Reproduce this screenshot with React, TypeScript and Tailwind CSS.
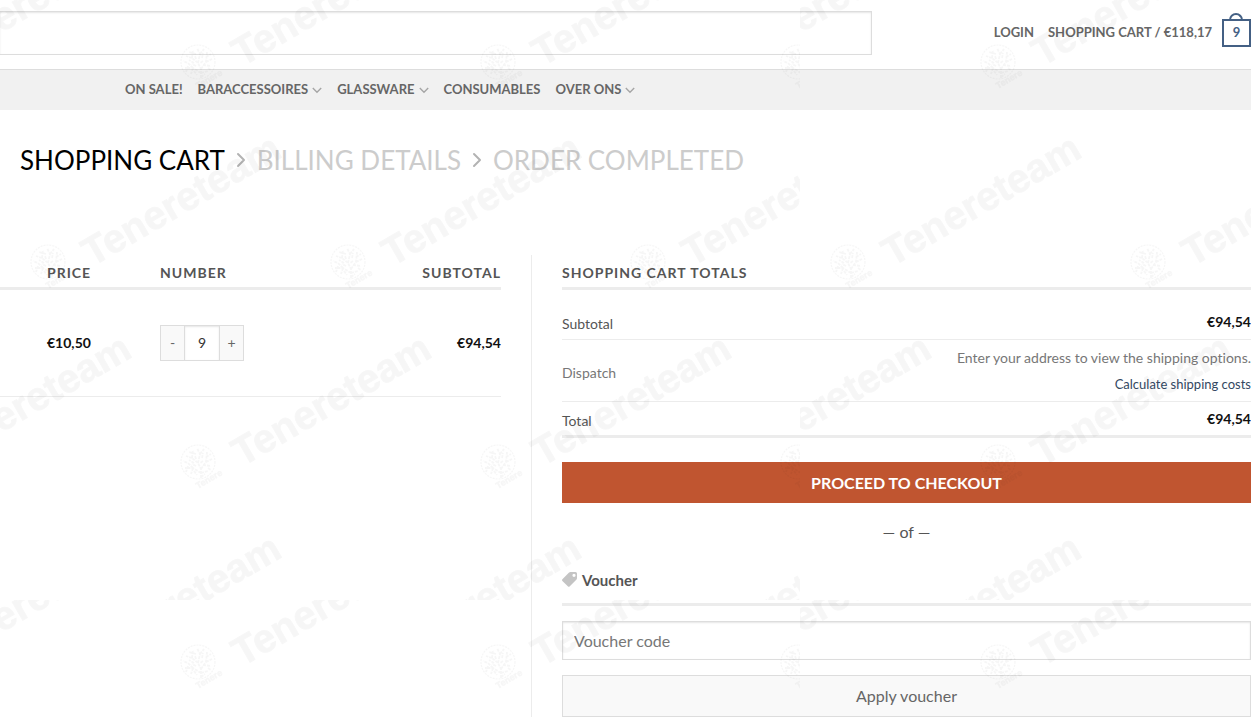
import React from 'react';
import { ChevronRight } from 'lucide-react';

const navItems = [
  { label: 'On sale!', menu: false },
  { label: 'Baraccessoires', menu: true },
  { label: 'Glassware', menu: true },
  { label: 'Consumables', menu: false },
  { label: 'Over ons', menu: true },
];

// Marks sit in staggered rows on a sheet of 800 x 600 that repeats over the page
const marks = [
  [-120, 44], [180, 44], [480, 44], [780, 44],
  [30, 244], [330, 244], [630, 244],
  [-120, 444], [180, 444], [480, 444], [780, 444],
  [30, 644], [330, 644], [630, 644],
];

const Watermark: React.FC = () => (
  <svg className="absolute inset-0 w-full h-full pointer-events-none" aria-hidden="true">
    <defs>
      <g id="mark">
        <circle cx="18" cy="18" r="17" fill="none" stroke="#000" strokeWidth="1.2" strokeDasharray="2 1" />
        <path
          d="M21 34 L21 25 L18 19 L12 14 M18 19 L20 10 L17 4 M21 25 L26 18 L27 8 M26 18 L32 15 M21 29 L13 24 L5 24 M13 24 L8 19 L3 17 M12 14 L6 12 M12 14 L13 6 M20 10 L24 5 M23 21 L31 22 M21 29 L28 27 M13 24 L11 30 M14 19 L9 16 M22 14 L23 9 M21 33 L25 30 M16 10 L9 8 M26 13 L31 10 M14 27 L17 31 M8 22 L6 28 M16 15 L15 12 M23 17 L20 19 M28 24 L31 26 M16 22 L12 20"
          fill="none"
          stroke="#000"
          strokeWidth="1.8"
          strokeDasharray="3 1"
        />
        <text x="18" y="45" transform="rotate(-30 18 45)" fontSize="9" fontWeight="700" stroke="#000" strokeWidth="0.5">Tenere</text>
        <text x="62" y="23" transform="rotate(-30 62 23)" fontSize="40" fontWeight="700" stroke="#000" strokeWidth="0.8">Tenereteam</text>
      </g>
      <pattern id="sheet" width="800" height="600" patternUnits="userSpaceOnUse">
        <g fontFamily="Liberation Sans, sans-serif">
          {marks.map(([x, y]) => (
            <use key={`${x}-${y}`} href="#mark" x={x} y={y} />
          ))}
        </g>
      </pattern>
    </defs>
    <rect width="100%" height="100%" fill="url(#sheet)" opacity="0.035" />
  </svg>
);

const MenuArrow: React.FC = () => (
  <svg viewBox="0 0 10 10" className="w-[10px] h-[10px]" fill="none" stroke="#a5a5a5" strokeWidth="1.4" aria-hidden="true">
    <path d="M0.8 3 L5 7.2 L9.2 3" />
  </svg>
);

const TagIcon: React.FC = () => (
  <svg viewBox="0 0 16 16" className="w-4 h-4" fill="#c4c4c4" aria-hidden="true">
    <path
      fillRule="evenodd"
      d="M8.5 0 H13.5 Q15 0 15 1.5 V6 Q15 7 14.3 7.7 L7.8 14.2 Q6.8 15.2 5.8 14.2 L0.4 9 Q-0.4 8 0.4 7.2 L6.8 0.8 Q7.6 0 8.5 0 Z M12 1.7 A1.6 1.6 0 1 0 12 4.9 A1.6 1.6 0 1 0 12 1.7 Z"
    />
  </svg>
);

const Header: React.FC = () => (
  <header className="text-[13px] font-bold uppercase text-[#666666]">
    <div className="flex h-[69px] items-center justify-between">
      <form className="w-[872px] pb-1">
        <input
          type="search"
          aria-label="Search"
          className="block h-11 w-full border border-l-0 border-[#dddddd] px-3 shadow-[inset_0_1px_2px_rgba(0,0,0,0.1)] outline-none"
        />
      </form>
      <div className="flex items-center whitespace-nowrap pb-[3px]">
        <a href="#login" className="mr-[14px]">Login</a>
        <a href="#cart" className="flex items-center gap-[10px]">
          <span>Shopping cart / €118,17</span>
          <span className="relative flex h-7 w-[29px] items-center justify-center border-2 border-[#446084] text-[#446084]">
            <span className="absolute -top-2 left-[5px] h-2 w-[14px] rounded-t-full border-2 border-b-0 border-[#446084]" />
            9
          </span>
        </a>
      </div>
    </div>
    <nav className="flex h-[41px] items-center gap-[15px] border-t border-[#dddddd] bg-[#f1f1f1] pl-[125px]">
      {navItems.map((item) => (
        <a key={item.label} href="#shop" className="flex items-center gap-1">
          {item.label}
          {item.menu && <MenuArrow />}
        </a>
      ))}
    </nav>
  </header>
);

const Steps: React.FC = () => (
  <nav className="flex items-center gap-1 pl-5 pt-8 text-[26px] leading-9 uppercase text-[#cccccc]">
    <a href="#cart" className="text-black">Shopping cart</a>
    <ChevronRight className="w-6 h-6 text-[#b3b3b3]" />
    <a href="#billing">Billing details</a>
    <ChevronRight className="w-6 h-6 text-[#b3b3b3]" />
    <span>Order completed</span>
  </nav>
);

const CartTable: React.FC = () => (
  <table className="w-full table-fixed border-separate border-spacing-0 text-left text-sm">
    <thead>
      <tr className="h-[35px] uppercase tracking-[1px] text-[#555555] [&>th]:border-b-[3px] [&>th]:border-[#ececec] [&>th]:pt-1">
        <th className="w-[160px] pl-[47px]">Price</th>
        <th>Number</th>
        <th className="text-right">Subtotal</th>
      </tr>
    </thead>
    <tbody>
      <tr className="h-[107px] font-bold text-[#111111] [&>td]:border-b [&>td]:border-[#ececec]">
        <td className="pl-[47px]">€10,50</td>
        <td>
          <div className="flex h-9 w-[84px] border border-[#dddddd] font-normal text-[#666666]">
            <button type="button" aria-label="Less" className="w-[23px] bg-[#f9f9f9]">-</button>
            <input
              type="text"
              aria-label="Number"
              defaultValue="9"
              className="min-w-0 flex-1 border-x border-[#dddddd] text-center text-[#333333] shadow-[inset_0_1px_2px_rgba(0,0,0,0.1)] outline-none"
            />
            <button type="button" aria-label="More" className="w-[23px] bg-[#f9f9f9]">+</button>
          </div>
        </td>
        <td className="text-right">€94,54</td>
      </tr>
    </tbody>
  </table>
);

const Totals: React.FC = () => (
  <div>
    <h2 className="flex h-[35px] items-center border-b-[3px] border-[#ececec] pt-1 text-sm font-bold uppercase tracking-[1px] text-[#555555]">
      Shopping cart totals
    </h2>
    <table className="mt-[15px] w-full border-separate border-spacing-0 text-sm text-[#555555] [&_td]:border-[#ececec] [&_th]:border-[#ececec]">
      <tbody>
        <tr className="h-[35px] [&>*]:border-b">
          <th className="pt-1 text-left font-normal">Subtotal</th>
          <td className="text-right font-bold text-[#111111]">€94,54</td>
        </tr>
        <tr className="h-[62px] text-[#777777] [&>*]:border-b">
          <th className="pt-1 text-left font-normal">Dispatch</th>
          <td className="text-right leading-[26px]">
            <p>Enter your address to view the shipping options.</p>
            <a href="#shipping" className="text-[13px] text-[#334862]">Calculate shipping costs</a>
          </td>
        </tr>
        <tr className="h-9 [&>*]:border-b-[3px]">
          <th className="pt-1 text-left font-normal">Total</th>
          <td className="text-right font-bold text-[#111111]">€94,54</td>
        </tr>
      </tbody>
    </table>
    <button type="button" className="mt-6 block h-[41px] w-full bg-[#c05530] font-bold uppercase text-white">
      Proceed to checkout
    </button>
    <p className="mt-[17px] text-center leading-6 text-[#555555]">— of —</p>
    <form>
      <label
        htmlFor="voucher"
        className="mt-[25px] flex h-[37px] items-center gap-1 border-b-[3px] border-[#ececec] pb-3 text-[15px] font-bold text-[#555555]"
      >
        <TagIcon />
        Voucher
      </label>
      <input
        id="voucher"
        type="text"
        placeholder="Voucher code"
        className="mt-[15px] block h-[39px] w-full border border-[#dddddd] px-[11px] shadow-[inset_0_1px_2px_rgba(0,0,0,0.1)] outline-none placeholder:text-[#777777]"
      />
      <button type="button" className="mt-[15px] block h-[42px] w-full border border-[#dddddd] bg-[#f9f9f9] text-[#666666]">
        Apply voucher
      </button>
    </form>
  </div>
);

export default function App() {
  return (
    <div className="relative min-h-screen overflow-hidden bg-white font-[Lato,sans-serif] text-base [font-variant-ligatures:none]">
      <Header />
      <Steps />
      <main className="mt-[77px] flex">
        <section className="w-[501px] shrink-0">
          <CartTable />
        </section>
        <section className="ml-[30px] flex-1 border-l border-[#ececec] pl-[30px]">
          <Totals />
        </section>
      </main>
      <Watermark />
    </div>
  );
}
